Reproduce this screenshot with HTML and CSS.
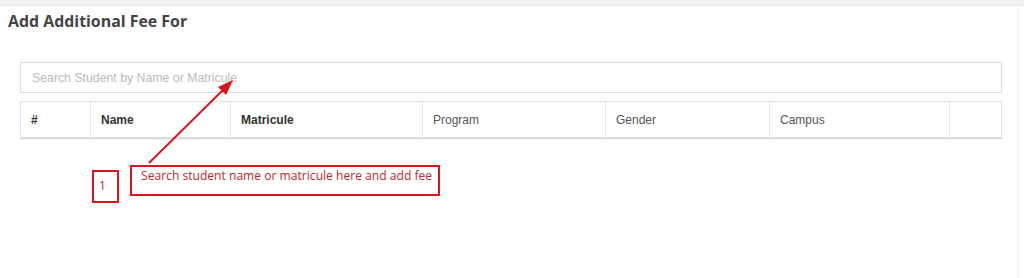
FILE: index.html
```html
<!DOCTYPE html>
<html>
<head>
<meta charset="utf-8">
<link rel="stylesheet" href="styles.css">
</head>
<body>
<div class="topbar"></div>
<div class="page">
  <h3 class="title">Add Additional Fee For</h3>
  <div class="content">
    <input class="search" type="text" placeholder="Search Student by Name or Matricule">
    <table class="students">
      <thead>
        <tr>
          <th class="c-num strong">#</th>
          <th class="c-name strong">Name</th>
          <th class="c-mat strong">Matricule</th>
          <th class="c-prog">Program</th>
          <th class="c-gen">Gender</th>
          <th class="c-camp">Campus</th>
          <th class="c-act"></th>
        </tr>
      </thead>
    </table>
  </div>
  <div class="note-num">1</div>
  <div class="note-text">Search student name or matricule here and add fee</div>
  <svg class="arrow" width="1024" height="278" viewBox="0 0 1024 278">
    <line x1="149" y1="163" x2="226" y2="87" stroke="#d9161c" stroke-width="2"/>
    <polygon points="233,80 218,87 226,95" fill="#d9161c"/>
  </svg>
</div>
</body>
</html>
```
FILE: styles.css
```css
html, body {
  margin: 0;
  padding: 0;
  background: #fff;
}
body {
  width: 1024px;
  height: 278px;
  overflow: hidden;
  font-family: "Liberation Sans", Arial, sans-serif;
}
.topbar {
  height: 5px;
  background: #f1f1f1;
  border-bottom: 1px solid #e9e9e9;
}
.page {
  position: relative;
  width: 1018px;
  height: 272px;
  border-right: 1px solid #eeeeee;
}
.title {
  margin: 0;
  padding: 6px 0 0 8px;
  font-family: "Open Sans", sans-serif;
  font-weight: 700;
  font-size: 15.9px;
  line-height: 19px;
  color: #444;
}
.content {
  padding: 31px 0 0 20px;
  width: 982px;
}
.search {
  display: block;
  box-sizing: border-box;
  width: 982px;
  height: 31px;
  margin: 0;
  padding: 0 11px;
  border: 1px solid #dddddd;
  border-radius: 0;
  font-family: "Liberation Sans", Arial, sans-serif;
  font-size: 12.3px;
  color: #555;
  outline: none;
}
.search::placeholder {
  color: #bbbbbb;
}
.students {
  margin-top: 8px;
  width: 982px;
  border-collapse: collapse;
  border: 1px solid #e3e3e3;
  box-shadow: 0 1px 1px rgba(0,0,0,0.05);
}
.students th {
  box-sizing: border-box;
  height: 36px;
  padding: 2px 10px 0;
  text-align: left;
  font-size: 12px;
  font-weight: 400;
  color: #555;
  border-left: 1px solid #e6e6e6;
  border-bottom: 2px solid #dedede;
}
.students th.strong {
  font-weight: 700;
  color: #333;
}
.c-num { width: 70px; }
.c-name { width: 140px; }
.c-mat { width: 192px; }
.c-prog { width: 183px; }
.c-gen { width: 164px; }
.c-camp { width: 180px; }
.c-act { width: 52px; }

.note-num {
  position: absolute;
  left: 92px;
  top: 164px;
  box-sizing: border-box;
  width: 27px;
  height: 33px;
  border: 2px solid #d9161c;
  padding-left: 5px;
  font-family: "Open Sans", sans-serif;
  font-size: 12px;
  line-height: 28px;
  color: #c0282d;
}
.note-text {
  position: absolute;
  left: 130px;
  top: 159px;
  box-sizing: border-box;
  width: 310px;
  height: 31px;
  border: 2px solid #d9161c;
  padding: 1px 0 0 9px;
  font-family: "Open Sans", sans-serif;
  font-size: 12.1px;
  line-height: 15px;
  color: #c0282d;
  white-space: nowrap;
}
.arrow {
  position: absolute;
  left: 0;
  top: -6px;
  pointer-events: none;
}
```
